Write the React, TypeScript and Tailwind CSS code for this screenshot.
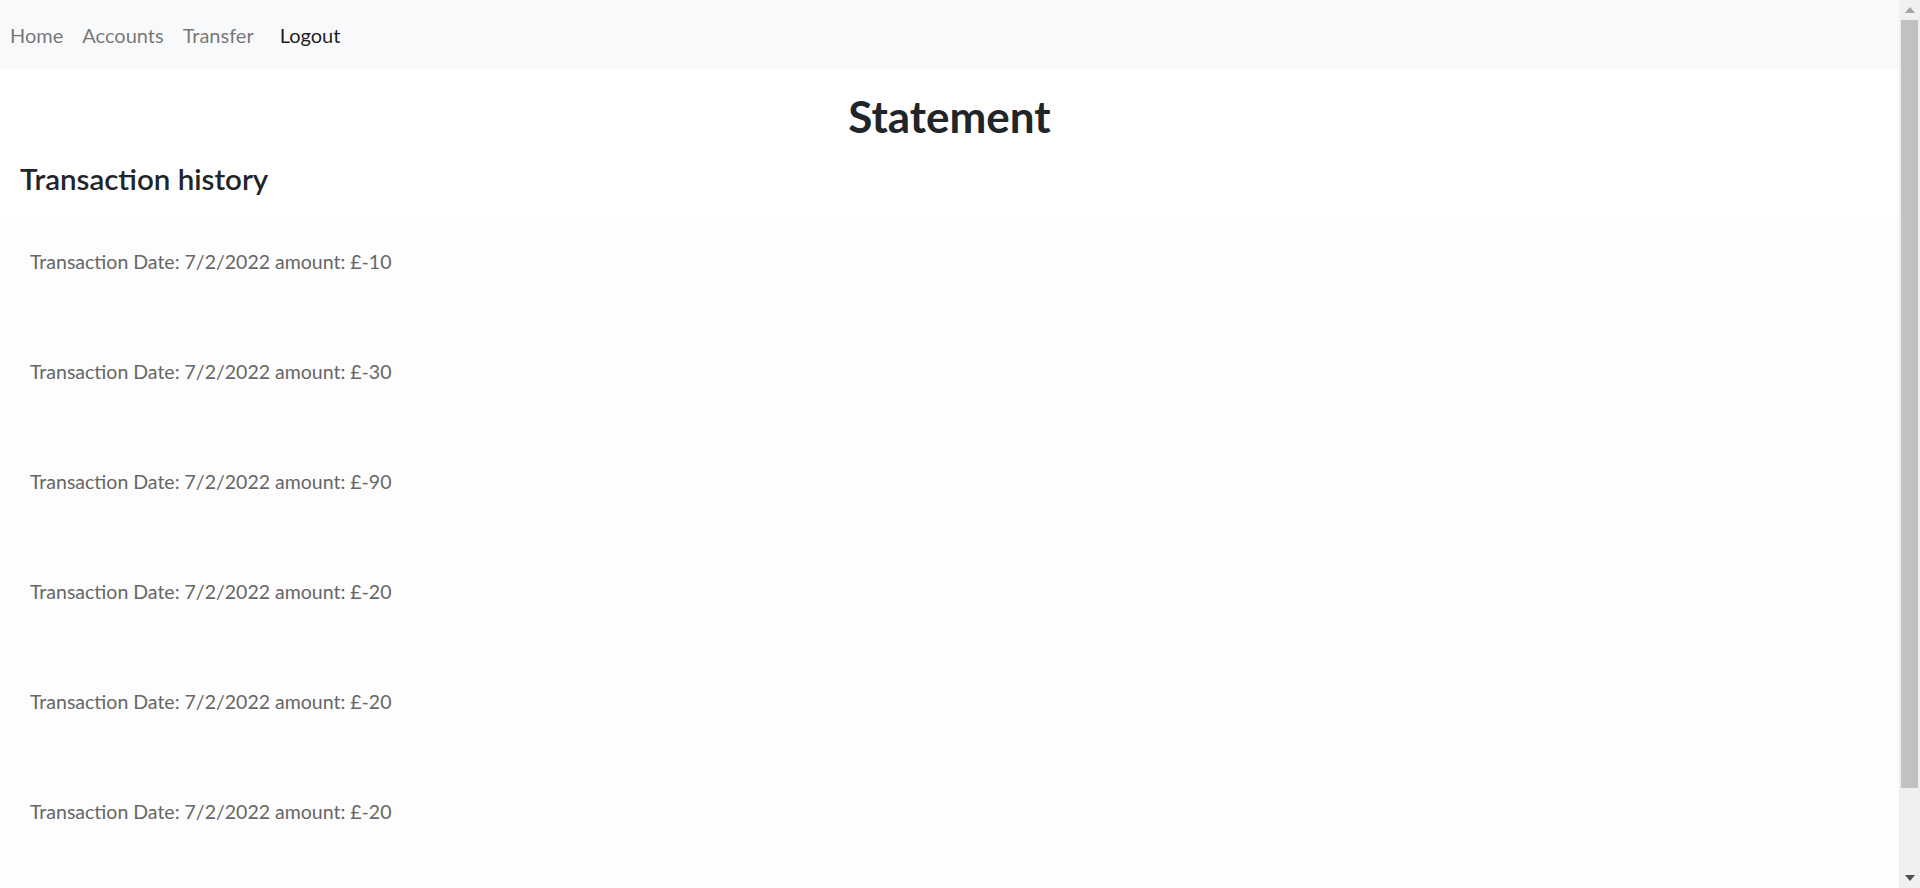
import React from "react"

const transactions = [
	{ date: "7/2/2022", amount: -10 },
	{ date: "7/2/2022", amount: -30 },
	{ date: "7/2/2022", amount: -90 },
	{ date: "7/2/2022", amount: -20 },
	{ date: "7/2/2022", amount: -20 },
	{ date: "7/2/2022", amount: -20 },
]

function NavBar() {
	return (
		<nav className="h-[69px] bg-[#f8f9fa] flex items-center px-[10px] text-[20px]">
			<div className="flex items-center gap-[19px] text-black/55">
				<a href="#">Home</a>
				<a href="#">Accounts</a>
				<a href="#">Transfer</a>
			</div>
			<a href="#" className="ml-[26px] text-black/90">
				Logout
			</a>
		</nav>
	)
}

// window scrollbar as it shows in the screenshot
function ScrollBar() {
	return (
		<div className="w-[21px] shrink-0 bg-[#f0f0f0] flex flex-col">
			<div className="h-[20px] flex items-center justify-center">
				<svg width="10" height="6" viewBox="0 0 10 6">
					<path d="M5 0L10 6H0z" fill="#a3a3a3" />
				</svg>
			</div>
			<div className="mx-[2px] h-[768px] bg-[#c1c1c1]" />
			<div className="flex-1" />
			<div className="h-[20px] flex items-center justify-center">
				<svg width="10" height="6" viewBox="0 0 10 6">
					<path d="M0 0H10L5 6z" fill="#505050" />
				</svg>
			</div>
		</div>
	)
}

export default function App() {
	return (
		<div className="h-screen flex bg-white text-[#212529] font-['Lato','Noto_Sans',sans-serif]">
			<main className="flex-1 overflow-hidden pb-[111px]">
				<NavBar />
				<h1 className="mt-[21px] text-center text-[44px] leading-[52px] font-bold">
					Statement
				</h1>
				<h3 className="mt-[18px] px-[20px] text-[29.5px] leading-[38px] font-semibold">
					Transaction history
				</h3>
				<div className="mt-[18px] bg-[#fdfdfd] pt-[31px]">
					{transactions.map((t, i) => (
						<div key={i} className="h-[110px] px-[30px] text-[19.5px] leading-[30px] text-[#666]">
							Transaction Date: {t.date} amount: £{t.amount}
						</div>
					))}
				</div>
			</main>
			<ScrollBar />
		</div>
	)
}
